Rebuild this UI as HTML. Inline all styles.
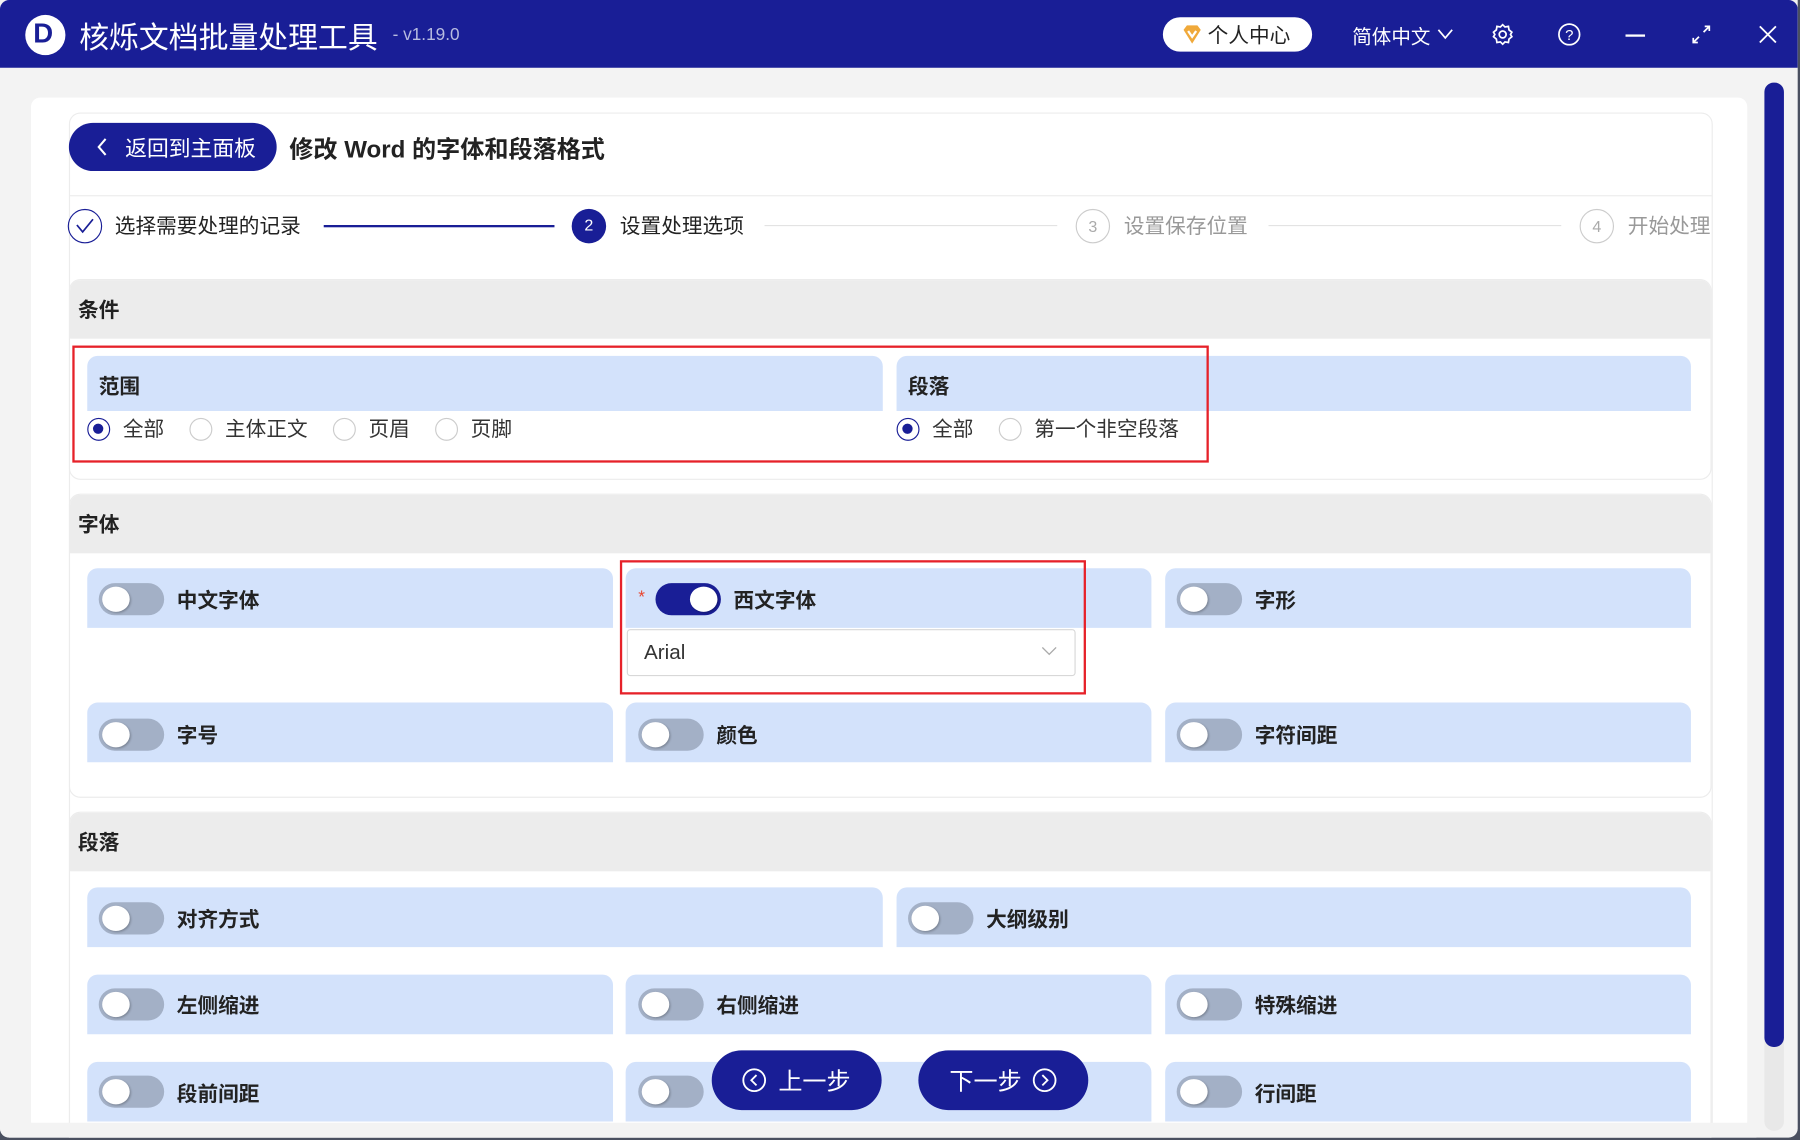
<!DOCTYPE html>
<html><head><meta charset="utf-8"><style>
*{box-sizing:border-box;margin:0;padding:0}
html,body{width:1800px;height:1140px;overflow:hidden;background:#4a5060}
#w{position:absolute;left:0;top:0;width:1568px;height:993px;transform:scale(1.147959);transform-origin:0 0;font-family:"Liberation Sans","Noto Sans CJK SC",sans-serif;}
.a{position:absolute}
.win{left:0;top:0;width:1566px;height:991px;background:#f3f3f3;border-radius:0 0 8px 8px;overflow:hidden}
.tb{left:0;top:0;width:1566px;height:59px;background:#191e96;border-radius:8px 8px 0 0}
.card{left:27px;top:85px;width:1495px;height:900px;background:#fff;border-radius:8px}
.inner{left:60px;top:98px;width:1432px;height:890px;border:1px solid #ececec;border-radius:10px}
.sec{border:1px solid #ececec;border-radius:10px;background:#fff;overflow:hidden}
.sh{position:absolute;left:0;top:0;right:0;height:51px;background:#ececec;font-weight:bold;font-size:18px;color:#222;padding:12px 0 0 7px}
.p{position:absolute;background:#d3e2fb;border-radius:9px 9px 0 0;height:52px}
.pl{position:absolute;font-weight:bold;font-size:18px;color:#222;margin-top:-2px}
.tg{position:absolute;width:57px;height:28px;border-radius:14px;background:#a3b0c6}
.tg:after{content:"";position:absolute;left:3px;top:3px;width:24px;height:22px;border-radius:50%;background:#fff;box-shadow:1px 1px 2px rgba(0,0,0,.25)}
.tg.on{background:#191e96}
.tg.on:after{left:30px;width:24px}
.rd{position:absolute;width:20px;height:20px;border-radius:50%;border:1px solid #ccc;background:#fff}
.rd.on{border:1.5px solid #191e96}
.rd.on:after{content:"";position:absolute;left:4px;top:4px;width:9px;height:9px;border-radius:50%;background:#191e96}
.rt{position:absolute;font-size:18px;color:#333;margin-top:-3px}
.red{position:absolute;border:2.5px solid #e62129}
.btn{position:absolute;background:#191e96;border-radius:26px;color:#fff;font-size:21px}
.st{position:absolute;font-size:18px;margin-top:-3px}
.sc{position:absolute;width:30px;height:30px;border-radius:50%;text-align:center;line-height:28px;font-size:14px}
</style></head><body><div id="w">
<div class="a win">
 <div class="a tb"></div>
 <div class="a" style="left:22px;top:13px;width:35px;height:35px;border-radius:50%;background:#fff"></div>
 <div class="a" style="left:29px;top:16px;font-weight:bold;font-size:24px;color:#191e96">D</div>
 <div class="a" style="left:69px;top:13px;font-size:26px;color:#fff">核烁文档批量处理工具</div>
 <div class="a" style="left:342px;top:22px;font-size:15px;color:#b8bce0">- v1.19.0</div>
 <div class="a" style="left:1013px;top:15px;width:130px;height:30px;border-radius:15px;background:#fff"></div>
 <svg class="a" style="left:1030px;top:22px" width="17" height="16" viewBox="0 0 17 16"><path d="M1 4 L4 0 H13 L16 4 L8.5 16Z" fill="#f0a93a"/><path d="M5 5 L8.5 10 L12 5" stroke="#fff" stroke-width="2" fill="none"/></svg>
 <div class="a" style="left:1052px;top:17px;font-size:18px;color:#222">个人中心</div>
 <div class="a" style="left:1178px;top:18px;font-size:17px;color:#fff">简体中文</div>
 <svg class="a" style="left:1252px;top:25px" width="14" height="10"><path d="M1 1 L7 8 L13 1" stroke="#fff" stroke-width="1.5" fill="none"/></svg>
 <svg class="a" style="left:1299px;top:20px" width="20" height="20" viewBox="0 0 20 20"><path d="M10 1.5 L12 3.5 L15 3 L15.5 6 L18 8 L16.8 10 L18 12 L15.5 14 L15 17 L12 16.5 L10 18.5 L8 16.5 L5 17 L4.5 14 L2 12 L3.2 10 L2 8 L4.5 6 L5 3 L8 3.5Z" stroke="#fff" stroke-width="1.5" fill="none"/><circle cx="10" cy="10" r="3" stroke="#fff" stroke-width="1.5" fill="none"/></svg>
 <svg class="a" style="left:1357px;top:20px" width="20" height="20"><circle cx="10" cy="10" r="9" stroke="#fff" stroke-width="1.5" fill="none"/><text x="10" y="15" font-size="13" fill="#fff" text-anchor="middle" font-family="Liberation Sans">?</text></svg>
 <div class="a" style="left:1416px;top:30px;width:17px;height:2px;background:#fff"></div>
 <svg class="a" style="left:1474px;top:22px" width="16" height="16"><path d="M10 6 L15 1 M11 1 H15 V5 M6 10 L1 15 M1 11 V15 H5" stroke="#fff" stroke-width="1.5" fill="none"/></svg>
 <svg class="a" style="left:1532px;top:22px" width="16" height="16"><path d="M1 1 L15 15 M15 1 L1 15" stroke="#fff" stroke-width="1.6"/></svg>

 <div class="a card"></div>
 <div class="a inner"></div>
 <div class="a" style="left:61px;top:170px;width:1430px;height:1px;background:#ececec"></div>
 <div class="a" style="left:1537px;top:72px;width:17px;height:913px;border-radius:8px;background:#e8e8e8"></div>
 <div class="a" style="left:1537px;top:72px;width:17px;height:840px;border-radius:8px;background:#191e96"></div>

 <div class="btn" style="left:60px;top:107px;width:181px;height:42px;font-size:19px">
  <svg class="a" style="left:24px;top:13px" width="10" height="16"><path d="M8 1 L2 8 L8 15" stroke="#fff" stroke-width="1.8" fill="none"/></svg>
  <span class="a" style="left:49px;top:8px">返回到主面板</span></div>
 <div class="a" style="left:252px;top:114px;font-size:21px;font-weight:bold;color:#222">修改 Word 的字体和段落格式</div>

 <div class="sc" style="left:59px;top:182px;border:1.5px solid #191e96"><svg width="16" height="14" style="margin-top:7px"><path d="M1 6 L6 12 L15 1" stroke="#191e96" stroke-width="1.5" fill="none"/></svg></div>
 <div class="st" style="left:100px;top:186px;color:#222">选择需要处理的记录</div>
 <div class="a" style="left:282px;top:196px;width:201px;height:2px;background:#191e96"></div>
 <div class="sc" style="left:498px;top:182px;background:#191e96;color:#fff">2</div>
 <div class="st" style="left:540px;top:186px;color:#222">设置处理选项</div>
 <div class="a" style="left:666px;top:196px;width:255px;height:1px;background:#e3e3e3"></div>
 <div class="sc" style="left:937px;top:182px;border:1px solid #ccc;color:#aaa">3</div>
 <div class="st" style="left:979px;top:186px;color:#999">设置保存位置</div>
 <div class="a" style="left:1105px;top:196px;width:255px;height:1px;background:#e3e3e3"></div>
 <div class="sc" style="left:1376px;top:182px;border:1px solid #ccc;color:#aaa">4</div>
 <div class="st" style="left:1418px;top:186px;color:#999">开始处理</div>

 <!-- 条件 -->
 <div class="a sec" style="left:60px;top:243px;width:1431px;height:175px"><div class="sh">条件</div></div>
 <div class="p" style="left:76px;top:310px;width:693px;height:48px"></div><div class="pl" style="left:86px;top:325px">范围</div>
 <div class="p" style="left:781px;top:310px;width:692px;height:48px"></div><div class="pl" style="left:791px;top:325px">段落</div>
 <div class="rd on" style="left:76px;top:364px"></div><div class="rt" style="left:107px;top:363px">全部</div>
 <div class="rd" style="left:165px;top:364px"></div><div class="rt" style="left:196px;top:363px">主体正文</div>
 <div class="rd" style="left:290px;top:364px"></div><div class="rt" style="left:321px;top:363px">页眉</div>
 <div class="rd" style="left:379px;top:364px"></div><div class="rt" style="left:410px;top:363px">页脚</div>
 <div class="rd on" style="left:781px;top:364px"></div><div class="rt" style="left:812px;top:363px">全部</div>
 <div class="rd" style="left:870px;top:364px"></div><div class="rt" style="left:901px;top:363px">第一个非空段落</div>
 <div class="red" style="left:63px;top:301px;width:990px;height:102px"></div>

 <!-- 字体 -->
 <div class="a sec" style="left:60px;top:430px;width:1431px;height:265px"><div class="sh">字体</div></div>
 <div class="p" style="left:76px;top:495px;width:458px"></div><div class="tg" style="left:86px;top:508px"></div><div class="pl" style="left:154px;top:511px">中文字体</div>
 <div class="p" style="left:545px;top:495px;width:458px"></div><div class="a" style="left:556px;top:512px;color:#e8452e;font-size:15px">*</div><div class="tg on" style="left:571px;top:508px"></div><div class="pl" style="left:639px;top:511px">西文字体</div>
 <div class="a" style="left:546px;top:548px;width:391px;height:41px;border:1px solid #d8d8d8;border-radius:3px;background:#fff"></div>
 <div class="a" style="left:561px;top:558px;font-size:18px;color:#333">Arial</div>
 <svg class="a" style="left:907px;top:563px" width="14" height="9"><path d="M1 1 L7 7 L13 1" stroke="#aaa" stroke-width="1.2" fill="none"/></svg>
 <div class="p" style="left:1015px;top:495px;width:458px"></div><div class="tg" style="left:1025px;top:508px"></div><div class="pl" style="left:1093px;top:511px">字形</div>
 <div class="red" style="left:540px;top:488px;width:406px;height:117px"></div>
 <div class="p" style="left:76px;top:612px;width:458px"></div><div class="tg" style="left:86px;top:626px"></div><div class="pl" style="left:154px;top:629px">字号</div>
 <div class="p" style="left:545px;top:612px;width:458px"></div><div class="tg" style="left:556px;top:626px"></div><div class="pl" style="left:624px;top:629px">颜色</div>
 <div class="p" style="left:1015px;top:612px;width:458px"></div><div class="tg" style="left:1025px;top:626px"></div><div class="pl" style="left:1093px;top:629px">字符间距</div>

 <!-- 段落 -->
 <div class="a sec" style="left:60px;top:707px;width:1431px;height:300px"><div class="sh">段落</div></div>
 <div class="p" style="left:76px;top:773px;width:693px"></div><div class="tg" style="left:86px;top:786px"></div><div class="pl" style="left:154px;top:789px">对齐方式</div>
 <div class="p" style="left:781px;top:773px;width:692px"></div><div class="tg" style="left:791px;top:786px"></div><div class="pl" style="left:859px;top:789px">大纲级别</div>
 <div class="p" style="left:76px;top:849px;width:458px"></div><div class="tg" style="left:86px;top:861px"></div><div class="pl" style="left:154px;top:864px">左侧缩进</div>
 <div class="p" style="left:545px;top:849px;width:458px"></div><div class="tg" style="left:556px;top:861px"></div><div class="pl" style="left:624px;top:864px">右侧缩进</div>
 <div class="p" style="left:1015px;top:849px;width:458px"></div><div class="tg" style="left:1025px;top:861px"></div><div class="pl" style="left:1093px;top:864px">特殊缩进</div>
 <div class="p" style="left:76px;top:925px;width:458px"></div><div class="tg" style="left:86px;top:937px"></div><div class="pl" style="left:154px;top:941px">段前间距</div>
 <div class="p" style="left:545px;top:925px;width:458px"></div><div class="tg" style="left:556px;top:937px"></div>
 <div class="p" style="left:1015px;top:925px;width:458px"></div><div class="tg" style="left:1025px;top:937px"></div><div class="pl" style="left:1093px;top:941px">行间距</div>
 <div class="a" style="left:0;top:978px;width:1530px;height:15px;background:#f3f3f3"></div>

 <div class="btn" style="left:620px;top:915px;width:148px;height:52px">
  <svg class="a" style="left:26px;top:15px" width="22" height="22"><circle cx="11" cy="11" r="9.5" stroke="#fff" stroke-width="1.6" fill="none"/><path d="M13 6.5 L8.5 11 L13 15.5" stroke="#fff" stroke-width="1.6" fill="none"/></svg>
  <span class="a" style="left:58px;top:11px">上一步</span></div>
 <div class="btn" style="left:800px;top:915px;width:148px;height:52px">
  <span class="a" style="left:27px;top:11px">下一步</span>
  <svg class="a" style="left:99px;top:15px" width="22" height="22"><circle cx="11" cy="11" r="9.5" stroke="#fff" stroke-width="1.6" fill="none"/><path d="M9 6.5 L13.5 11 L9 15.5" stroke="#fff" stroke-width="1.6" fill="none"/></svg></div>
</div>
</div></body></html>
